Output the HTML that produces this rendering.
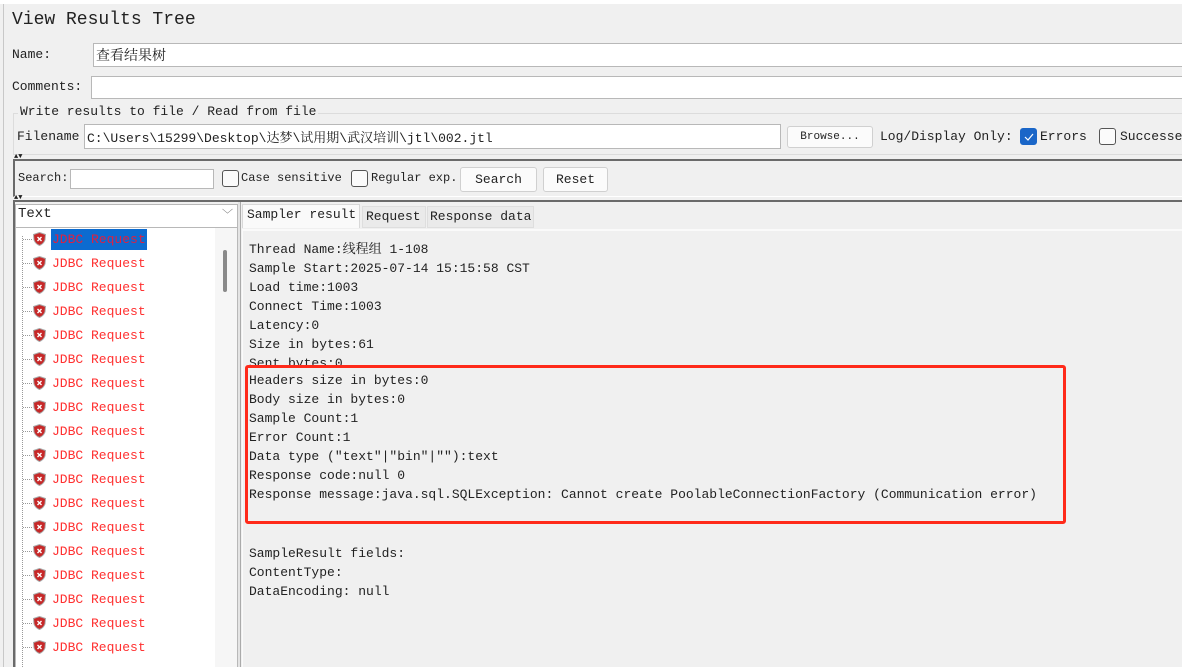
<!DOCTYPE html>
<html><head><meta charset="utf-8"><style>
*{margin:0;padding:0;box-sizing:border-box}
body{width:1182px;height:667px;overflow:hidden;background:#f0f0f0;position:relative;font-family:"Liberation Mono","Noto Serif CJK SC","Noto Sans CJK SC",monospace;font-size:13px;color:#222}
.a{position:absolute;white-space:pre}
.f{position:absolute;background:#fff;border:1px solid #b8b8b8}
.btn{position:absolute;background:#fbfbfb;border:1px solid #d0d0d0;border-radius:3px;text-align:center}
.cb{position:absolute;width:17px;height:17px;border:1px solid #555;border-radius:3px;background:#fbfbfb}
.row{position:absolute;left:0;height:24px;width:220px}
.ico{position:absolute;left:33px;top:5px;width:13px;height:14px}
.dash{position:absolute;left:23px;top:12px;width:9px;border-top:1px dotted #999}
.t{position:absolute;left:51px;top:2px;color:#ff3030;font-size:13px;padding:0 1px;height:21px;line-height:21px}
.txt{position:absolute;left:249px;line-height:19px;font-size:13px;white-space:pre;color:#222}
</style></head><body>
<svg width="0" height="0" style="position:absolute"><defs><g id="sh"><path d="M6.5 0.5 L12.5 2.5 L12 8 Q10.5 12 6.5 13.5 Q2.5 12 1 8 L0.5 2.5 Z" fill="#c62828" stroke="#aaa" stroke-width="1"/><path d="M4.5 5l4 4M8.5 5l-4 4" stroke="#fff" stroke-width="1.4"/></g></defs></svg>
<div class="a" style="left:0;top:0;width:1182px;height:4px;background:#fff"></div>
<div class="a" style="left:3px;top:4px;width:1px;height:663px;background:#c8c8c8"></div>
<div class="a" style="left:12px;top:10px;font-size:18px">View Results Tree</div>
<div class="a" style="left:12px;top:47px">Name:</div>
<div class="f" style="left:93px;top:43px;width:1095px;height:24px"></div>
<div class="a" style="left:96px;top:45px;font-family:'Noto Serif CJK SC',serif;font-size:14px">查看结果树</div>
<div class="a" style="left:12px;top:79px">Comments:</div>
<div class="f" style="left:91px;top:76px;width:1097px;height:23px"></div>
<div class="a" style="left:13px;top:113px;width:1170px;height:42px;border:1px solid #dcdcdc;border-right:none"></div>
<div class="a" style="left:18px;top:104px;background:#f0f0f0;padding:0 2px">Write results to file / Read from file</div>
<div class="a" style="left:17px;top:129px">Filename</div>
<div class="f" style="left:84px;top:124px;width:697px;height:25px"></div>
<div class="a" style="left:87px;top:127px">C:\Users\15299\Desktop\<span style="font-family:'Noto Serif CJK SC',serif">达梦</span>\<span style="font-family:'Noto Serif CJK SC',serif">试用期</span>\<span style="font-family:'Noto Serif CJK SC',serif">武汉培训</span>\jtl\002.jtl</div>
<div class="btn" style="left:787px;top:126px;width:86px;height:22px;font-size:11px;line-height:20px">Browse...</div>
<div class="a" style="left:880px;top:129px">Log/Display Only:</div>
<div class="cb" style="left:1020px;top:128px;background:#1a66c8;border-color:#1a66c8"><svg width="15" height="15" style="position:absolute;left:0;top:0"><path d="M4 8l3 3 5-6" stroke="#fff" stroke-width="1.2" fill="none"/></svg></div>
<div class="a" style="left:1040px;top:129px">Errors</div>
<div class="cb" style="left:1099px;top:128px"></div>
<div class="a" style="left:1120px;top:129px">Successe</div>
<div class="a" style="left:13px;top:159px;width:1170px;height:38px;border-top:2px solid #6a6a6a;border-left:2px solid #6a6a6a;border-bottom:1px solid #fff"></div>
<div class="a" style="left:14px;top:153px;font-size:7px">▲▼</div>
<div class="a" style="left:18px;top:171px;font-size:12px">Search:</div>
<div class="f" style="left:70px;top:169px;width:144px;height:20px"></div>
<div class="cb" style="left:222px;top:170px"></div>
<div class="a" style="left:241px;top:171px;font-size:12px">Case sensitive</div>
<div class="cb" style="left:351px;top:170px"></div>
<div class="a" style="left:371px;top:171px;font-size:12px">Regular exp.</div>
<div class="btn" style="left:460px;top:167px;width:77px;height:25px;line-height:23px;font-size:13px">Search</div>
<div class="btn" style="left:543px;top:167px;width:65px;height:25px;line-height:23px;font-size:13px">Reset</div>
<div class="a" style="left:13px;top:200px;width:1170px;height:2px;background:#6a6a6a"></div>
<div class="a" style="left:14px;top:194px;font-size:7px">▲▼</div>
<div class="a" style="left:13px;top:202px;width:2px;height:465px;background:#6a6a6a"></div>
<div class="f" style="left:15px;top:204px;width:223px;height:24px"></div>
<div class="a" style="left:18px;top:206px;font-size:14px">Text</div>
<div class="a" style="left:222px;top:206px;color:#777;font-size:11px">﹀</div>
<div class="a" style="left:15px;top:228px;width:223px;height:439px;background:#fff;border-left:1px solid #b8b8b8;border-right:1px solid #b8b8b8"></div>
<div class="a" style="left:215px;top:228px;width:22px;height:439px;background:#f6f6f6"></div>
<div class="a" style="left:223px;top:250px;width:4px;height:42px;background:#8a8a8a;border-radius:2px"></div>
<div class="a" style="left:22px;top:236px;height:431px;border-left:1px dotted #999"></div>
<div class="a" style="left:0;top:227px;width:240px;height:440px">
<div class="row" style="top:0"><div class="dash"></div><svg class="ico"><use href="#sh"/></svg><div class="t" style="background:#0c6bd0;color:#e02040">JDBC Request</div></div>
<div class="row" style="top:24px"><div class="dash"></div><svg class="ico"><use href="#sh"/></svg><div class="t">JDBC Request</div></div>
<div class="row" style="top:48px"><div class="dash"></div><svg class="ico"><use href="#sh"/></svg><div class="t">JDBC Request</div></div>
<div class="row" style="top:72px"><div class="dash"></div><svg class="ico"><use href="#sh"/></svg><div class="t">JDBC Request</div></div>
<div class="row" style="top:96px"><div class="dash"></div><svg class="ico"><use href="#sh"/></svg><div class="t">JDBC Request</div></div>
<div class="row" style="top:120px"><div class="dash"></div><svg class="ico"><use href="#sh"/></svg><div class="t">JDBC Request</div></div>
<div class="row" style="top:144px"><div class="dash"></div><svg class="ico"><use href="#sh"/></svg><div class="t">JDBC Request</div></div>
<div class="row" style="top:168px"><div class="dash"></div><svg class="ico"><use href="#sh"/></svg><div class="t">JDBC Request</div></div>
<div class="row" style="top:192px"><div class="dash"></div><svg class="ico"><use href="#sh"/></svg><div class="t">JDBC Request</div></div>
<div class="row" style="top:216px"><div class="dash"></div><svg class="ico"><use href="#sh"/></svg><div class="t">JDBC Request</div></div>
<div class="row" style="top:240px"><div class="dash"></div><svg class="ico"><use href="#sh"/></svg><div class="t">JDBC Request</div></div>
<div class="row" style="top:264px"><div class="dash"></div><svg class="ico"><use href="#sh"/></svg><div class="t">JDBC Request</div></div>
<div class="row" style="top:288px"><div class="dash"></div><svg class="ico"><use href="#sh"/></svg><div class="t">JDBC Request</div></div>
<div class="row" style="top:312px"><div class="dash"></div><svg class="ico"><use href="#sh"/></svg><div class="t">JDBC Request</div></div>
<div class="row" style="top:336px"><div class="dash"></div><svg class="ico"><use href="#sh"/></svg><div class="t">JDBC Request</div></div>
<div class="row" style="top:360px"><div class="dash"></div><svg class="ico"><use href="#sh"/></svg><div class="t">JDBC Request</div></div>
<div class="row" style="top:384px"><div class="dash"></div><svg class="ico"><use href="#sh"/></svg><div class="t">JDBC Request</div></div>
<div class="row" style="top:408px"><div class="dash"></div><svg class="ico"><use href="#sh"/></svg><div class="t">JDBC Request</div></div>
</div>
<div class="a" style="left:238px;top:202px;width:3px;height:465px;background:#e4e4e4;border-right:1px solid #aaa"></div>
<div class="a" style="left:242px;top:204px;width:118px;height:24px;background:#fafafa;border:1px solid #d8d8d8;border-bottom:none"></div>
<div class="a" style="left:247px;top:207px">Sampler result</div>
<div class="a" style="left:362px;top:206px;width:64px;height:22px;background:#eaeaea;border:1px solid #dedede"></div>
<div class="a" style="left:366px;top:209px">Request</div>
<div class="a" style="left:427px;top:206px;width:107px;height:22px;background:#eaeaea;border:1px solid #dedede"></div>
<div class="a" style="left:430px;top:209px">Response data</div>
<div class="a" style="left:242px;top:229px;width:940px;height:438px;border-top:2px solid #fafafa;border-left:1px solid #fafafa"></div>
<div class="txt" style="top:238px">Thread Name:<span style="font-family:'Noto Serif CJK SC',serif">线程组</span> 1-108
Sample Start:2025-07-14 15:15:58 CST
Load time:1003
Connect Time:1003
Latency:0
Size in bytes:61
Sent bytes:0
Headers size in bytes:0
Body size in bytes:0
Sample Count:1
Error Count:1
Data type ("text"|"bin"|""):text
Response code:null 0
Response message:java.sql.SQLException: Cannot create PoolableConnectionFactory (Communication error)


SampleResult fields:
ContentType:
DataEncoding: null</div>
<div class="a" style="left:245px;top:365px;width:821px;height:159px;border:3px solid #ff2a1a;border-radius:3px;background:#f0f0f0"></div>
<div class="txt" style="top:371px">Headers size in bytes:0
Body size in bytes:0
Sample Count:1
Error Count:1
Data type ("text"|"bin"|""):text
Response code:null 0
Response message:java.sql.SQLException: Cannot create PoolableConnectionFactory (Communication error)</div>
</body></html>
